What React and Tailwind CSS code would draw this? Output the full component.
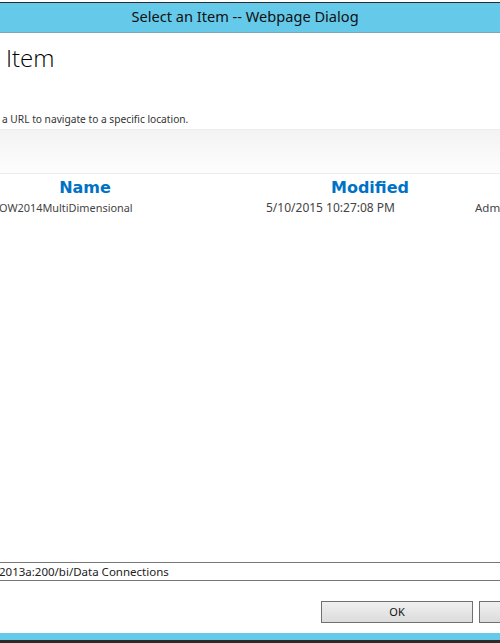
import React from 'react'

const ui = { fontFamily: '"Noto Sans", "Open Sans", sans-serif' }
const head = { fontFamily: '"DejaVu Sans", Verdana, sans-serif' }

const Dialog = () => {
  return (
    <div className="w-[500px] h-[643px] overflow-hidden bg-white flex flex-col" style={ui}>
      {/* window frame top */}
      <div className="h-[2px] bg-white" />
      <div className="h-[1px] bg-[#2b2b2b]" />
      <div className="h-[30px] bg-[#65c9ea] border-b border-[#7fa5b6] flex items-center justify-center">
        <span className="text-[14.6px] text-[#111] mr-[10px] -mt-[1px]">Select an Item -- Webpage Dialog</span>
      </div>

      {/* body */}
      <div className="flex-1 flex flex-col">
        <h1 className="pl-[6px] pt-[10px] text-[24px] font-light leading-[30px] text-black" style={{ fontFamily: '"Open Sans", sans-serif' }}>
          Item
        </h1>
        <p className="pl-[2px] mt-[39px] text-[10.2px] leading-[14px] text-[#333] whitespace-nowrap">
          a URL to navigate to a specific location.
        </p>

        {/* toolbar band */}
        <div className="mt-[3px] h-[45px] border-t border-b border-[#ececec] bg-gradient-to-b from-[#f3f3f3] to-[#fdfdfd]" />

        {/* list header */}
        <div className="flex items-center h-[26px] pt-[2px] text-[#0072c6] font-bold text-[16px]" style={head}>
          <div className="w-[170px] shrink-0 text-center">Name</div>
          <div className="w-[140px] shrink-0 ml-[130px] text-center">Modified</div>
        </div>

        {/* list row */}
        <div className="flex items-center h-[16px] text-[#444] whitespace-nowrap">
          <div className="w-[266px] shrink-0 -ml-[1px] text-[10.9px]">OW2014MultiDimensional</div>
          <div className="w-[209px] shrink-0 ml-[1px] text-[12px]">5/10/2015 10:27:08 PM</div>
          <div className="shrink-0 text-[11.5px]">Admin</div>
        </div>

        <div className="flex-1" />

        {/* location box */}
        <div className="h-[19px] border-t border-b border-[#777] flex items-center text-[11.5px] text-[#222] whitespace-nowrap">
          <span className="-ml-[1px]">2013a:200/bi/Data Connections</span>
        </div>

        {/* buttons */}
        <div className="flex mt-[20px] mb-[10px] pl-[321px] gap-[6px]">
          <button className="w-[152px] h-[22px] shrink-0 border border-[#707070] bg-gradient-to-b from-[#f0f0f0] to-[#dcdcdc] text-[11px] text-[#111]">
            OK
          </button>
          <button className="w-[80px] h-[22px] shrink-0 border border-[#707070] bg-gradient-to-b from-[#f0f0f0] to-[#dcdcdc] text-[11px] text-[#111]">
            Cancel
          </button>
        </div>
      </div>

      {/* window frame bottom */}
      <div className="h-[7px] bg-[#65c9ea]" />
      <div className="h-[3px] bg-[#2b2b2b]" />
    </div>
  )
}

export default function App() {
  return <Dialog />
}
